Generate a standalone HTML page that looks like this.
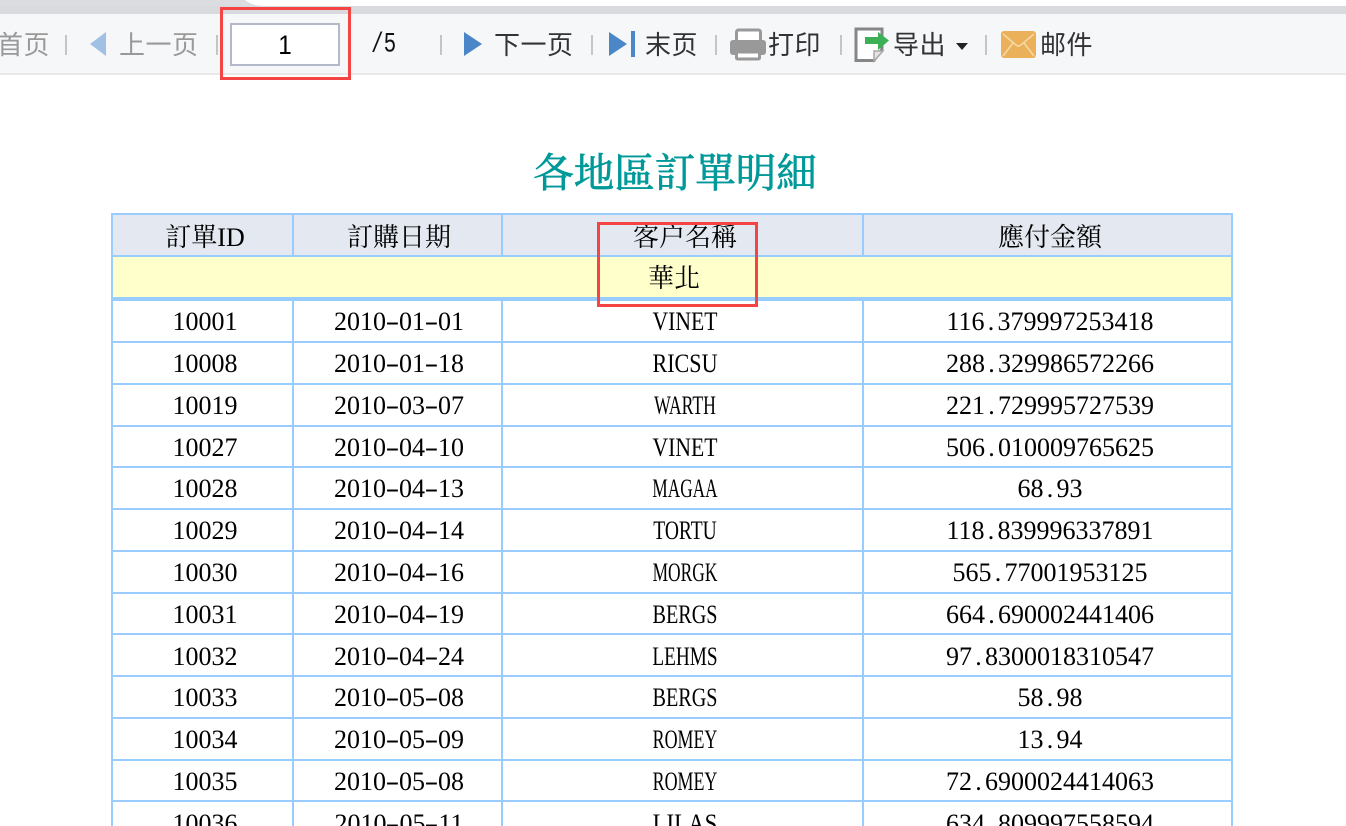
<!DOCTYPE html>
<html lang="zh">
<head>
<meta charset="utf-8">
<title>各地區訂單明細</title>
<style>
html,body{margin:0;padding:0;background:#fff;width:1346px;height:826px;overflow:hidden}
#p{position:relative;width:1346px;height:826px;overflow:hidden}
.a{position:absolute}
.tb{position:absolute;top:21px;height:48px;line-height:48px;font-family:"Liberation Sans","Noto Sans CJK SC",sans-serif;font-size:26px;letter-spacing:.5px;color:#333;white-space:nowrap}
.g{color:#999}
.sep{position:absolute;top:35px;width:2px;height:20px;background:#c4c5c7}
.line{position:absolute;background:#99ccff}
.row{position:absolute;left:0;width:1346px;height:42px;line-height:42px;font-family:"Liberation Serif","Noto Serif CJK TC",serif;font-size:26px;color:#000}
.row span{position:absolute;top:0;text-align:center;white-space:nowrap}
.c1{left:105px;width:200px}
.c2{left:299px;width:200px}
.c3{left:585px;width:200px}
.c4{left:900px;width:300px}
.row i{display:inline-block;width:13px;font-style:normal;text-align:center}
.row i.h{transform:scaleX(1.6)}
</style>
</head>
<body>
<div id="p">
<!-- browser chrome -->
<svg class="a" style="left:0;top:0" width="270" height="7" viewBox="0 0 270 7"><path d="M0 0H245Q252 6 265 6V7H0Z" fill="#dcdde1"/></svg>
<div class="a" style="left:0;top:6px;width:1346px;height:8px;background:#d9dade"></div>
<div class="a" style="left:0;top:14px;width:1346px;height:59px;background:#f6f7f9"></div>
<div class="a" style="left:0;top:73px;width:1346px;height:2px;background:#e9e9eb"></div>

<!-- toolbar -->
<div class="tb g" style="left:-3px">首页</div>
<div class="sep" style="left:65px"></div>
<svg class="a" style="left:88px;top:30px" width="20" height="28" viewBox="0 0 20 28"><path d="M2 14 18 2V26Z" fill="#a0c1e3"/></svg>
<div class="tb g" style="left:119px">上一页</div>
<div class="sep" style="left:216px"></div>
<div class="a" style="left:230px;top:23px;width:106px;height:39px;border:2px solid #b4b9c9;background:#fff"></div>
<div class="a" style="left:230px;top:23px;width:110px;height:43px;text-align:center;font:27px/44px 'Liberation Sans',sans-serif;color:#000;transform:scaleX(.9)">1</div>
<div class="a" style="left:371px;top:23px;height:45px;font:21px/45px 'Liberation Mono',monospace;color:#111;white-space:nowrap;transform:scaleY(1.3)">/5</div>
<div class="sep" style="left:440px"></div>
<svg class="a" style="left:462px;top:30px" width="22" height="28" viewBox="0 0 22 28"><path d="M2 2 20 14 2 26Z" fill="#4a86c8"/></svg>
<div class="tb" style="left:494px">下一页</div>
<div class="sep" style="left:591px"></div>
<svg class="a" style="left:608px;top:30px" width="30" height="28" viewBox="0 0 30 28"><path d="M1 2 19 14 1 26Z" fill="#4a86c8"/><rect x="23" y="1" width="4" height="26" fill="#4a86c8"/></svg>
<div class="tb" style="left:645px">末页</div>
<div class="sep" style="left:715px"></div>
<svg class="a" style="left:729px;top:28px" width="37" height="33" viewBox="0 0 37 33"><rect x="7.500" y="2" width="24" height="13" rx="2" fill="#fff" stroke="#999" stroke-width="3"/><rect x="1" y="12" width="36" height="15" rx="3" fill="#999"/><rect x="7.500" y="24" width="23" height="7" rx="1" fill="#fff" stroke="#999" stroke-width="3"/></svg>
<div class="tb" style="left:768px">打印</div>
<div class="sep" style="left:840px"></div>
<svg class="a" style="left:853px;top:26px" width="37" height="37" viewBox="0 0 37 37"><path d="M3 3H29V23L21 34.500H3Z" fill="#fff" stroke="#868686" stroke-width="3"/><path d="M21 35V25H30Z" fill="#e4e4e4" stroke="#a8a8a8" stroke-width="1.500"/><path d="M12 11H25V6L36 14.500 25 24V18H12Z" fill="#3cb054"/></svg>
<div class="tb" style="left:893px">导出</div>
<svg class="a" style="left:955px;top:42px" width="14" height="9" viewBox="0 0 14 9"><path d="M1 1H13L7 8Z" fill="#222"/></svg>
<div class="sep" style="left:985px"></div>
<svg class="a" style="left:1001px;top:31px" width="35" height="27" viewBox="0 0 35 27"><rect width="35" height="27" rx="3" fill="#eab05a"/><path d="M2 3 15 14Q17.500 16 20 14L33 3M2 25 12 12M33 25 23 12" fill="none" stroke="#f6d8a4" stroke-width="1.600"/></svg>
<div class="tb" style="left:1040px">邮件</div>

<!-- title -->
<div class="a" style="left:375px;top:149px;width:600px;height:50px;line-height:50px;text-align:center;font-family:'Liberation Serif','Noto Serif CJK TC',serif;font-size:40.500px;color:#009999;-webkit-text-stroke:.7px #009999;white-space:nowrap">各地區訂單明細</div>

<!-- table backgrounds -->
<div class="a" style="left:113px;top:215px;width:1118px;height:40px;background:#e4e8f0"></div>
<div class="a" style="left:113px;top:257px;width:1118px;height:40px;background:#ffffcc"></div>

<!-- table lines -->
<div class="line" style="left:111px;top:213px;width:1122px;height:2px"></div>
<div class="line" style="left:111px;top:255px;width:1122px;height:2px"></div>
<div class="line" style="left:111px;top:297px;width:1122px;height:4px"></div>
<div class="line" style="left:111px;top:341px;width:1122px;height:2px"></div>
<div class="line" style="left:111px;top:383px;width:1122px;height:2px"></div>
<div class="line" style="left:111px;top:425px;width:1122px;height:2px"></div>
<div class="line" style="left:111px;top:466px;width:1122px;height:2px"></div>
<div class="line" style="left:111px;top:508px;width:1122px;height:2px"></div>
<div class="line" style="left:111px;top:550px;width:1122px;height:2px"></div>
<div class="line" style="left:111px;top:592px;width:1122px;height:2px"></div>
<div class="line" style="left:111px;top:633px;width:1122px;height:2px"></div>
<div class="line" style="left:111px;top:675px;width:1122px;height:2px"></div>
<div class="line" style="left:111px;top:717px;width:1122px;height:2px"></div>
<div class="line" style="left:111px;top:759px;width:1122px;height:2px"></div>
<div class="line" style="left:111px;top:800px;width:1122px;height:2px"></div>

<div class="line" style="left:111px;top:213px;width:2px;height:613px"></div>
<div class="line" style="left:292px;top:213px;width:2px;height:42px"></div>
<div class="line" style="left:501px;top:213px;width:2px;height:42px"></div>
<div class="line" style="left:862px;top:213px;width:2px;height:42px"></div>
<div class="line" style="left:292px;top:301px;width:2px;height:525px"></div>
<div class="line" style="left:501px;top:301px;width:2px;height:525px"></div>
<div class="line" style="left:862px;top:301px;width:2px;height:525px"></div>
<div class="line" style="left:1231px;top:213px;width:2px;height:613px"></div>

<!-- header -->
<div class="row" style="top:217px"><span class="c1">訂單ID</span><span class="c2">訂購日期</span><span class="c3">客戶名稱</span><span class="c4">應付金額</span></div>
<div class="row" style="top:258px"><span class="c3" style="left:574px">華北</span></div>

<!-- data -->
<div class="row" style="top:301px"><span class="c1">10001</span><span class="c2">2010<i class="h">-</i>01<i class="h">-</i>01</span><span class="c3" style="transform:scaleX(.833)">VINET</span><span class="c4">116<i>.</i>379997253418</span></div>
<div class="row" style="top:343px"><span class="c1">10008</span><span class="c2">2010<i class="h">-</i>01<i class="h">-</i>18</span><span class="c3" style="transform:scaleX(.85)">RICSU</span><span class="c4">288<i>.</i>329986572266</span></div>
<div class="row" style="top:385px"><span class="c1">10019</span><span class="c2">2010<i class="h">-</i>03<i class="h">-</i>07</span><span class="c3" style="transform:scaleX(.68)">WARTH</span><span class="c4">221<i>.</i>729995727539</span></div>
<div class="row" style="top:427px"><span class="c1">10027</span><span class="c2">2010<i class="h">-</i>04<i class="h">-</i>10</span><span class="c3" style="transform:scaleX(.833)">VINET</span><span class="c4">506<i>.</i>010009765625</span></div>
<div class="row" style="top:468px"><span class="c1">10028</span><span class="c2">2010<i class="h">-</i>04<i class="h">-</i>13</span><span class="c3" style="transform:scaleX(.663)">MAGAA</span><span class="c4">68<i>.</i>93</span></div>
<div class="row" style="top:510px"><span class="c1">10029</span><span class="c2">2010<i class="h">-</i>04<i class="h">-</i>14</span><span class="c3" style="transform:scaleX(.75)">TORTU</span><span class="c4">118<i>.</i>839996337891</span></div>
<div class="row" style="top:552px"><span class="c1">10030</span><span class="c2">2010<i class="h">-</i>04<i class="h">-</i>16</span><span class="c3" style="transform:scaleX(.67)">MORGK</span><span class="c4">565<i>.</i>77001953125</span></div>
<div class="row" style="top:594px"><span class="c1">10031</span><span class="c2">2010<i class="h">-</i>04<i class="h">-</i>19</span><span class="c3" style="transform:scaleX(.776)">BERGS</span><span class="c4">664<i>.</i>690002441406</span></div>
<div class="row" style="top:636px"><span class="c1">10032</span><span class="c2">2010<i class="h">-</i>04<i class="h">-</i>24</span><span class="c3" style="transform:scaleX(.74)">LEHMS</span><span class="c4">97<i>.</i>8300018310547</span></div>
<div class="row" style="top:677px"><span class="c1">10033</span><span class="c2">2010<i class="h">-</i>05<i class="h">-</i>08</span><span class="c3" style="transform:scaleX(.776)">BERGS</span><span class="c4">58<i>.</i>98</span></div>
<div class="row" style="top:719px"><span class="c1">10034</span><span class="c2">2010<i class="h">-</i>05<i class="h">-</i>09</span><span class="c3" style="transform:scaleX(.69)">ROMEY</span><span class="c4">13<i>.</i>94</span></div>
<div class="row" style="top:761px"><span class="c1">10035</span><span class="c2">2010<i class="h">-</i>05<i class="h">-</i>08</span><span class="c3" style="transform:scaleX(.69)">ROMEY</span><span class="c4">72<i>.</i>6900024414063</span></div>
<div class="row" style="top:803px"><span class="c1">10036</span><span class="c2">2010<i class="h">-</i>05<i class="h">-</i>11</span><span class="c3" style="transform:scaleX(.88)">LILAS</span><span class="c4">634<i>.</i>809997558594</span></div>

<!-- red annotation boxes -->
<div class="a" style="left:220px;top:7px;width:125px;height:67px;border:3.500px solid #f44444"></div>
<div class="a" style="left:597px;top:222px;width:155px;height:79px;border:3.500px solid #f44444"></div>
</div>
</body>
</html>
